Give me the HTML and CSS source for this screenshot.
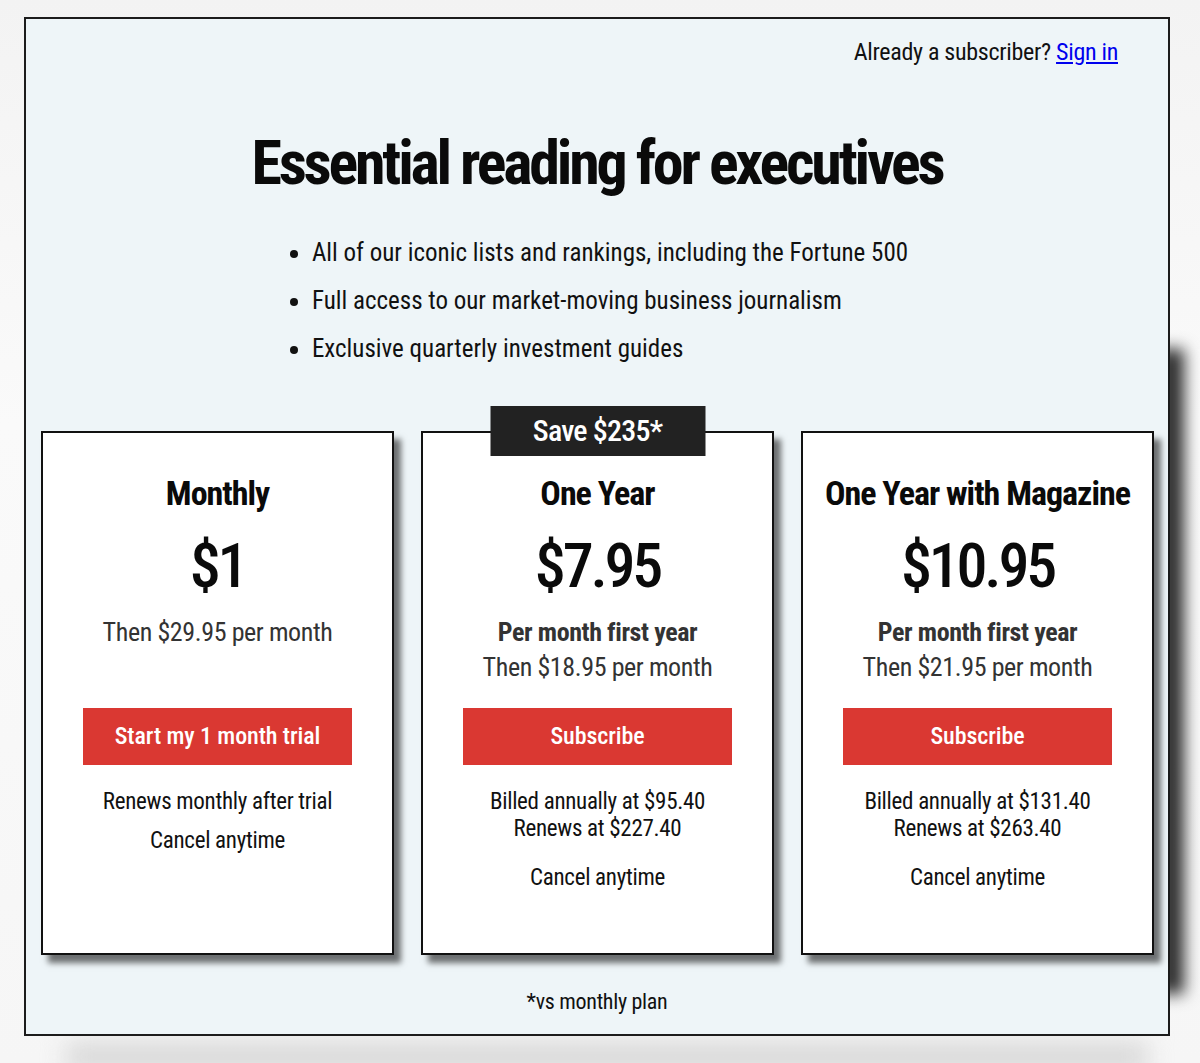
FILE: index.html
```html
<!DOCTYPE html>
<html lang="en">
<head>
<meta charset="utf-8">
<title>Essential reading for executives</title>
<link rel="stylesheet" href="styles.css">
</head>
<body>
<div class="frame">
  <div class="signin-row">Already a subscriber? <a href="#" class="signin-link">Sign in</a></div>
  <h1 class="headline">Essential reading for executives</h1>
  <div class="benefits-wrap">
    <ul class="benefits">
      <li>All of our iconic lists and rankings, including the Fortune 500</li>
      <li>Full access to our market-moving business journalism</li>
      <li>Exclusive quarterly investment guides</li>
    </ul>
  </div>
  <div class="plans">
    <div class="plan">
      <div class="plan-title">Monthly</div>
      <div class="plan-price">$1</div>
      <div class="plan-desc">
        <div class="desc-line">Then $29.95 per month</div>
      </div>
      <a href="#" class="plan-btn">Start my 1 month trial</a>
      <div class="plan-notes">
        <p class="note note-spaced">Renews monthly after trial</p>
        <p class="note note-spaced">Cancel anytime</p>
      </div>
    </div>
    <div class="plan">
      <div class="badge">Save $235*</div>
      <div class="plan-title">One Year</div>
      <div class="plan-price">$7.95</div>
      <div class="plan-desc">
        <div class="desc-line desc-bold">Per month first year</div>
        <div class="desc-line">Then $18.95 per month</div>
      </div>
      <a href="#" class="plan-btn">Subscribe</a>
      <div class="plan-notes">
        <p class="note">Billed annually at $95.40<br>Renews at $227.40</p>
        <p class="note note-gap">Cancel anytime</p>
      </div>
    </div>
    <div class="plan">
      <div class="plan-title">One Year with Magazine</div>
      <div class="plan-price">$10.95</div>
      <div class="plan-desc">
        <div class="desc-line desc-bold">Per month first year</div>
        <div class="desc-line">Then $21.95 per month</div>
      </div>
      <a href="#" class="plan-btn">Subscribe</a>
      <div class="plan-notes">
        <p class="note">Billed annually at $131.40<br>Renews at $263.40</p>
        <p class="note note-gap">Cancel anytime</p>
      </div>
    </div>
  </div>
  <div class="footnote">*vs monthly plan</div>
</div>
</body>
</html>
```
FILE: styles.css
```css
html, body {
  margin: 0;
  padding: 0;
}
body {
  background: linear-gradient(#f3f3f3, #fafafa 40%, #f6f6f6);
  font-family: "Roboto Condensed", "Roboto", "DejaVu Sans Condensed", sans-serif;
  font-stretch: condensed;
  color: #111;
  height: 1063px;
  overflow: hidden;
}
.frame {
  position: relative;
  box-sizing: border-box;
  margin: 17px 0 0 24px;
  width: 1146px;
  height: 1019px;
  border: 2px solid #1c1c1c;
  background: #eef5f8;
  display: flex;
  flex-direction: column;
}
.frame::before {
  content: "";
  position: absolute;
  top: 330px;
  bottom: 40px;
  right: -16px;
  width: 26px;
  background: #2a2a2a;
  filter: blur(8px);
  z-index: -1;
}
.frame::after {
  content: "";
  position: absolute;
  left: 40px;
  right: 20px;
  bottom: -38px;
  height: 30px;
  background: #d8d8d8;
  filter: blur(12px);
  z-index: -1;
}
.signin-row {
  padding: 18px 50px 0 0;
  text-align: right;
  font-size: 24px;
  line-height: 30px;
  color: #111;
  letter-spacing: -0.3px;
}
.signin-link {
  color: #0000ee;
  text-decoration: underline;
}
.headline {
  margin: 60px 0 0;
  text-align: center;
  font-size: 62px;
  line-height: 72px;
  font-weight: bold;
  letter-spacing: -3.2px;
  color: #0a0a0a;
}
.benefits-wrap {
  margin-top: 30px;
  text-align: center;
}
.benefits {
  display: inline-block;
  margin: 0;
  padding-left: 26px;
  text-align: left;
  font-size: 25px;
  line-height: 48px;
  color: #111;
  letter-spacing: 0;
}
.plans {
  margin-top: 58px;
  padding: 0 14px 0 15px;
  display: flex;
  gap: 27px;
}
.plan {
  position: relative;
  box-sizing: border-box;
  width: 353px;
  height: 524px;
  border: 2px solid #111;
  background: #fff;
  box-shadow: 7px 8px 6px rgba(0, 0, 0, 0.55);
  padding-top: 40px;
  text-align: center;
  display: flex;
  flex-direction: column;
  align-items: center;
}
.badge {
  position: absolute;
  top: -27px;
  left: 50%;
  transform: translateX(-50%);
  width: 215px;
  height: 50px;
  background: #222;
  color: #fff;
  font-size: 30px;
  line-height: 50px;
  font-weight: 500;
  letter-spacing: -0.8px;
}
.plan-title {
  font-size: 34px;
  line-height: 40px;
  font-weight: bold;
  color: #0a0a0a;
  letter-spacing: -1px;
}
.plan-price {
  margin-top: 17px;
  font-size: 62px;
  line-height: 72px;
  font-weight: 500;
  color: #0a0a0a;
  letter-spacing: -3.2px;
}
.plan-desc {
  margin-top: 13px;
  height: 70px;
  font-size: 26px;
  line-height: 35px;
  color: #333;
  letter-spacing: -0.4px;
}
.desc-bold {
  font-weight: bold;
}
.plan-btn {
  margin-top: 23px;
  width: 269px;
  height: 57px;
  background: #da3832;
  color: #fff;
  text-decoration: none;
  font-size: 24px;
  line-height: 57px;
  font-weight: 500;
  letter-spacing: -0.1px;
}
.plan-notes {
  margin-top: 23px;
}
.note {
  margin: 0;
  font-size: 23px;
  line-height: 27px;
  color: #111;
  letter-spacing: -0.3px;
}
.note-spaced {
  margin-bottom: 12px;
}
.note-gap {
  margin-top: 22px;
}
.footnote {
  margin-top: 32px;
  text-align: center;
  font-size: 22px;
  line-height: 30px;
  color: #111;
  letter-spacing: -0.3px;
}
```
